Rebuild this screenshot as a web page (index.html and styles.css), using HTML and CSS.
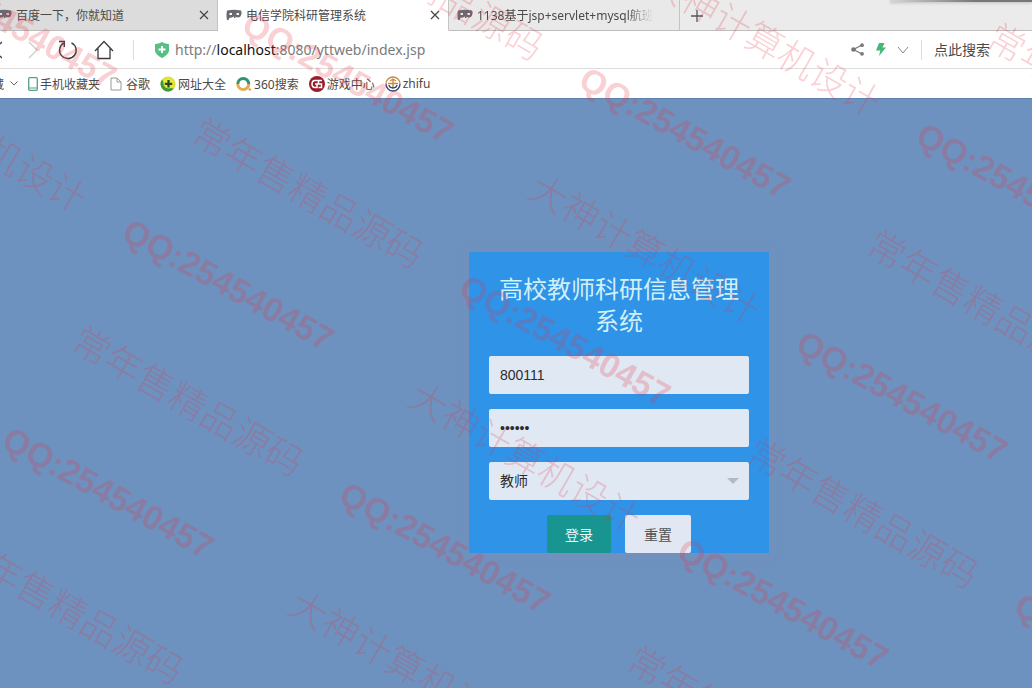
FILE: index.html
```html
<!DOCTYPE html>
<html lang="zh-CN">
<head>
<meta charset="utf-8">
<meta name="viewport" content="width=device-width, initial-scale=1">
<title>电信学院科研管理系统</title>
<link rel="stylesheet" href="styles.css">
</head>
<body>

<!-- mask icon shared by the tabs -->
<svg class="defs" aria-hidden="true">
	<symbol id="mask" viewBox="0 0 16 12">
		<path fill="currentColor" fill-rule="evenodd" d="M1 1.500Q8 0 15 1.500Q16.500 5 14 8Q11 9 9.500 7.500V9H8V7.500Q6 9 4 8.500Q3 9 2.500 11H1Q0 6 1 1.500ZM3.500 4V6H6V4ZM10.500 4V6H13V4Z"/>
	</symbol>
	<symbol id="cross" viewBox="0 0 10 10">
		<path d="M1 1L9 9M9 1L1 9" fill="none" stroke="#444" stroke-width="1.200"/>
	</symbol>
</svg>

<header class="browser">
	<nav class="tabs">
		<div class="tab tab-first">
			<svg class="mask"><use href="#mask"/></svg>
			<span class="tab-title">百度一下，你就知道</span>
			<button class="icon-btn" type="button" aria-label="关闭"><svg width="10" height="10"><use href="#cross"/></svg></button>
		</div>
		<div class="tab tab-active">
			<svg class="mask"><use href="#mask"/></svg>
			<span class="tab-title">电信学院科研管理系统</span>
			<button class="icon-btn" type="button" aria-label="关闭"><svg width="10" height="10"><use href="#cross"/></svg></button>
		</div>
		<div class="tab tab-last">
			<svg class="mask"><use href="#mask"/></svg>
			<span class="tab-title tab-fade">1138基于jsp+servlet+mysql航班</span>
		</div>
		<button class="icon-btn new-tab" type="button" aria-label="新标签">
			<svg width="14" height="14" viewBox="0 0 14 14"><path d="M7 1V13M1 7H13" stroke="#555" stroke-width="1.300"/></svg>
		</button>
		<span class="window-edge"></span>
	</nav>

	<div class="toolbar">
		<button class="icon-btn back" type="button" aria-label="后退">
			<svg width="2" height="18" viewBox="0 0 2 18"><path d="M2 1L0 3M2 17L0 15" stroke="#444" stroke-width="1.500"/></svg>
		</button>
		<button class="icon-btn forward" type="button" aria-label="前进">
			<svg width="10" height="18" viewBox="0 0 10 18"><path d="M1 1L9 9L1 17" fill="none" stroke="#ccc" stroke-width="1.300"/></svg>
		</button>
		<button class="icon-btn reload" type="button" aria-label="刷新">
			<svg width="20" height="20" viewBox="0 0 20 20"><path d="M13.500 2.800A8.300 8.300 0 1 1 5.500 3.200M1 1.500H6.300V7" fill="none" stroke="#3c3c3c" stroke-width="1.400"/></svg>
		</button>
		<button class="icon-btn home" type="button" aria-label="主页">
			<svg width="20" height="20" viewBox="0 0 20 20"><path d="M1 11L10 1.500L19 11M4 8.500V18.500H16V8.500" fill="none" stroke="#3c3c3c" stroke-width="1.300"/></svg>
		</button>
		<span class="divider"></span>
		<svg class="shield" width="14" height="16" viewBox="0 0 14 16"><path d="M0 2Q4 2 7 0Q10 2 14 2V9Q13 13 7 16Q1 13 0 9Z" fill="#55bf84"/><path d="M7 4V11M3.500 7.500H10.500" stroke="#fff" stroke-width="2"/></svg>
		<div class="url">http://<b>localhost</b>:8080/yttweb/index.jsp</div>
		<button class="icon-btn share" type="button" aria-label="分享">
			<svg width="13" height="13" viewBox="0 0 13 13"><path d="M11 2L2.500 6.500L11 11" fill="none" stroke="#777" stroke-width="1.200"/><circle cx="2.500" cy="6.500" r="2.300" fill="#777"/><circle cx="11" cy="2.200" r="1.900" fill="#777"/><circle cx="11" cy="10.800" r="1.900" fill="#777"/></svg>
		</button>
		<button class="icon-btn" type="button" aria-label="极速模式">
			<svg width="10" height="13" viewBox="0 0 10 13"><path d="M3 0H8.500L6.500 4.500H10L3 13L4.300 7.500H0Z" fill="#45b878"/></svg>
		</button>
		<button class="icon-btn" type="button" aria-label="更多">
			<svg width="12" height="8" viewBox="0 0 12 8"><path d="M1 1L6 7L11 1" fill="none" stroke="#888"/></svg>
		</button>
		<span class="divider"></span>
		<input class="search" type="text" aria-label="搜索" placeholder="点此搜索">
	</div>

	<nav class="bookmarks">
		<a class="clipped" href="#">收藏</a>
		<svg class="drop" width="8" height="5" viewBox="0 0 8 5"><path d="M.5 .5L4 4L7.500 .5" fill="none" stroke="#666"/></svg>
		<a href="#"><svg width="10" height="14" viewBox="0 0 10 14"><rect x=".7" y=".7" width="8.600" height="12.600" rx="1" fill="none" stroke="#5a9e82" stroke-width="1.300"/><path d="M1 11H9" stroke="#5a9e82"/></svg>手机收藏夹</a>
		<a class="plain" href="#"><svg width="12" height="14" viewBox="0 0 12 14"><path d="M1 1H7L11 5V13H1ZM7 1V5H11" fill="none" stroke="#999"/></svg>谷歌</a>
		<a href="#"><svg width="16" height="16" viewBox="0 0 16 16"><circle cx="8" cy="8" r="7.500" fill="#dce233"/><path d="M2 3.500A7.500 7.500 0 0 0 14 12.500Q6 13 2 3.500Z" fill="#3d9a35"/><circle cx="8.500" cy="7.500" r="5" fill="#f0e640"/><path d="M8.500 4V11.500M4.800 7.800H12.200" stroke="#234c1e" stroke-width="2.200"/></svg>网址大全</a>
		<a href="#"><svg width="16" height="16" viewBox="0 0 16 16"><path d="M1.800 8A5.500 5.500 0 0 1 12.800 8" fill="none" stroke="#2c9473" stroke-width="3"/><path d="M1.800 8A5.500 5.500 0 0 0 12.800 8" fill="none" stroke="#e1ad55" stroke-width="3"/><circle cx="13.800" cy="13.500" r="1.300" fill="#e1a040"/></svg>360搜索</a>
		<a href="#"><svg width="16" height="16" viewBox="0 0 16 16"><circle cx="8" cy="8" r="8" fill="#971d2c"/><path d="M13 4.500H6Q3 4.500 3 8Q3 11.500 6 11.500H8V8H6M9.500 4.500V8H12.500V11.500H9.500" fill="none" stroke="#fff" stroke-width="1.500"/></svg>游戏中心</a>
		<a href="#"><svg width="16" height="16" viewBox="0 0 16 16"><path d="M1 8A7 7 0 0 1 15 8" fill="none" stroke="#c78c43" stroke-width="1.300"/><path d="M1 8A7 7 0 0 0 15 8" fill="none" stroke="#34456f" stroke-width="1.300"/><path d="M8 3V12M3 7.500H13M5 5L8 3L11 5" fill="none" stroke="#c78c43" stroke-width="1.400"/><path d="M4 9Q4.500 12 8 12Q11.500 12 12 9" fill="none" stroke="#34456f" stroke-width="1.400"/></svg>zhifu</a>
	</nav>
</header>

<main class="page">
	<form class="login" action="#" method="post">
		<h1>高校教师科研信息管理系统</h1>
		<input class="field" type="text" name="username" aria-label="用户名" value="800111">
		<input class="field" type="password" name="password" aria-label="密码" value="800111">
		<div class="select-wrap">
			<select class="field" name="role" aria-label="身份">
				<option>教师</option>
			</select>
		</div>
		<div class="buttons">
			<button class="btn btn-login" type="submit">登录</button>
			<button class="btn btn-reset" type="reset">重置</button>
		</div>
	</form>
</main>

<!-- watermark -->
<svg class="watermark" aria-hidden="true">
	<g class="wm-qq">
		<text x="-13" y="12" transform="translate(-80 -28) rotate(29)">QQ:254540457</text>
		<text x="-13" y="12" transform="translate(257 27) rotate(29)">QQ:254540457</text>
		<text x="-13" y="12" transform="translate(594 82) rotate(29)">QQ:254540457</text>
		<text x="-13" y="12" transform="translate(931 138) rotate(29)">QQ:254540457</text>
		<text x="-13" y="12" transform="translate(137 234) rotate(29)">QQ:254540457</text>
		<text x="-13" y="12" transform="translate(474 290) rotate(29)">QQ:254540457</text>
		<text x="-13" y="12" transform="translate(811 346) rotate(29)">QQ:254540457</text>
		<text x="-13" y="12" transform="translate(17 442) rotate(29)">QQ:254540457</text>
		<text x="-13" y="12" transform="translate(354 497) rotate(29)">QQ:254540457</text>
		<text x="-13" y="12" transform="translate(692 553) rotate(29)">QQ:254540457</text>
		<text x="-13" y="12" transform="translate(1029 608) rotate(29)">QQ:254540457</text>
	</g>
	<g class="wm-cn">
		<text x="-18" y="13" transform="translate(331 -70) rotate(30)">常年售精品源码</text>
		<text x="-18" y="13" transform="translate(668 -14) rotate(30)">大神计算机设计</text>
		<text x="-18" y="13" transform="translate(1006 43) rotate(30)">常年售精品源码</text>
		<text x="-18" y="13" transform="translate(-126 82) rotate(30)">大神计算机设计</text>
		<text x="-18" y="13" transform="translate(211 138) rotate(30)">常年售精品源码</text>
		<text x="-18" y="13" transform="translate(548 194) rotate(30)">大神计算机设计</text>
		<text x="-18" y="13" transform="translate(886 250) rotate(30)">常年售精品源码</text>
		<text x="-18" y="13" transform="translate(91 346) rotate(30)">常年售精品源码</text>
		<text x="-18" y="13" transform="translate(428 402) rotate(30)">大神计算机设计</text>
		<text x="-18" y="13" transform="translate(766 458) rotate(30)">常年售精品源码</text>
		<text x="-18" y="13" transform="translate(-29 554) rotate(30)">常年售精品源码</text>
		<text x="-18" y="13" transform="translate(308 610) rotate(30)">大神计算机设计</text>
		<text x="-18" y="13" transform="translate(646 666) rotate(30)">常年售精品源码</text>
	</g>
</svg>

</body>
</html>
```
FILE: styles.css
```css
* {
    box-sizing: border-box;
}
body {
    margin: 0;
    min-height: 100vh;
    display: flex;
    flex-direction: column;
    font-family: "Noto Sans", "Noto Sans CJK SC", sans-serif;
    font-size: 12px;
    color: #4a4a4a;
    background-color: #6e92bf;
}
svg {
    display: block;
    flex: none;
}
a {
    color: inherit;
    text-decoration: none;
}
.defs {
    position: absolute;
    width: 0;
    height: 0;
}
.icon-btn {
    display: flex;
    flex: none;
    padding: 0;
    border: 0;
    background: none;
    cursor: pointer;
}
.browser {
    background-color: #fff;
    border-bottom: 1px solid #5d80ad;
}

/* tabs */
.tabs {
    display: flex;
    align-items: stretch;
    height: 31px;
    overflow: hidden;
    background-color: #ebebeb;
    box-shadow: inset 0 -1px #bdbdbd;
}
.tab {
    display: flex;
    align-items: center;
    flex: none;
    width: 231px;
    padding: 0 8px;
    gap: 4px;
    white-space: nowrap;
    border-right: 1px solid #c4c4c4;
    border-bottom: 1px solid #bdbdbd;
}
.tab-first {
    width: 218px;
    padding-left: 0;
    background-color: #dcdcdc;
}
.tab-first .mask {
    margin-left: -4px;
}
.tab-active {
    background-color: #fff;
    border-bottom-color: #fff;
}
.tab-last {
    background-color: #e9e9e9;
}
.tab-title {
    flex: 1;
    overflow: hidden;
}
.tab-fade {
    flex: none;
    width: 176px;
    -webkit-mask-image: linear-gradient(to right, #000 85%, transparent);
    mask-image: linear-gradient(to right, #000 85%, transparent);
}
.mask {
    width: 16px;
    height: 12px;
    color: #6c6870;
}
.new-tab {
    align-items: center;
    padding: 0 10px;
}
.window-edge {
    width: 142px;
    height: 2px;
    margin-left: auto;
    background: linear-gradient(to right, #d6d6d6, #777 60%);
    box-shadow: 0 1px 3px #bbb;
}

/* address row */
.toolbar {
    display: flex;
    align-items: center;
    height: 38px;
    border-bottom: 1px solid #ddd;
}
.forward {
    margin-left: 26px;
}
.reload {
    margin-left: 20px;
}
.home {
    margin-left: 16px;
}
.divider {
    width: 1px;
    height: 20px;
    margin: 0 12px;
    background-color: #ddd;
}
.home + .divider {
    margin: 0 21px 0 19px;
}
.url {
    flex: 1;
    margin-left: 6px;
    font-size: 14px;
    color: #7b7b7b;
}
.url b {
    font-weight: normal;
    color: #111;
}
.share {
    margin-right: 12px;
}
.share + .icon-btn {
    margin-right: 11px;
}
.search {
    width: 98px;
    padding: 0;
    border: 0;
    outline: 0;
    background: none;
    font: inherit;
    font-size: 14px;
}
.search::placeholder {
    color: #4a4a4a;
    opacity: 1;
}

/* bookmarks */
.bookmarks {
    display: flex;
    align-items: center;
    gap: 10px;
    height: 29px;
    white-space: nowrap;
}
.bookmarks a {
    display: flex;
    align-items: center;
    gap: 2px;
}
.bookmarks .plain {
    gap: 4px;
}
.bookmarks .clipped {
    justify-content: flex-end;
    width: 4px;
    overflow: hidden;
}
.drop {
    margin-left: -4px;
}

/* page */
.page {
    flex: 1;
    display: flex;
    justify-content: center;
    align-items: flex-start;
    padding: 153px 0 20px 206px;
}
.login {
    width: 300px;
    padding: 22px 20px 0;
    background-color: #2f93e8;
    box-shadow: 0 0 8px rgba(125, 140, 185, .8);
    font-family: "Liberation Sans", "Noto Sans CJK SC", sans-serif;
}
.login h1 {
    margin: 0 0 18px;
    font-size: 24px;
    font-weight: normal;
    line-height: 32px;
    text-align: center;
    color: #d0f0f8;
}
.field {
    display: block;
    width: 100%;
    height: 38px;
    margin-bottom: 15px;
    padding: 0 11px;
    border: 0;
    border-radius: 2px;
    background-color: #e0e8f3;
    color: #2c2c2c;
    font-family: inherit;
    font-size: 14px;
    appearance: none;
}
.select-wrap {
    position: relative;
}
.select-wrap::after {
    content: "";
    position: absolute;
    right: 10px;
    top: 16px;
    border: 6px solid transparent;
    border-top-color: #b4bac2;
    pointer-events: none;
}
.buttons {
    display: flex;
    justify-content: center;
    gap: 14px;
}
.btn {
    height: 38px;
    padding: 0 18px;
    border: 0;
    border-radius: 2px;
    font-family: inherit;
    font-size: 14px;
    cursor: pointer;
}
.btn-login {
    background-color: #189590;
    color: #e8fafa;
}
.btn-reset {
    padding: 0 19px;
    background-color: #e1e8f4;
    color: #505050;
}

/* watermark over everything */
.watermark {
    position: fixed;
    top: 0;
    left: 0;
    width: 100%;
    height: 100%;
    pointer-events: none;
    fill: rgba(230, 50, 70, .23);
}
.wm-qq {
    font-family: "Liberation Sans", sans-serif;
    font-size: 34px;
    font-weight: bold;
}
.wm-cn {
    font-family: "Noto Sans CJK SC", sans-serif;
    font-size: 37px;
    font-weight: 300;
}
```
